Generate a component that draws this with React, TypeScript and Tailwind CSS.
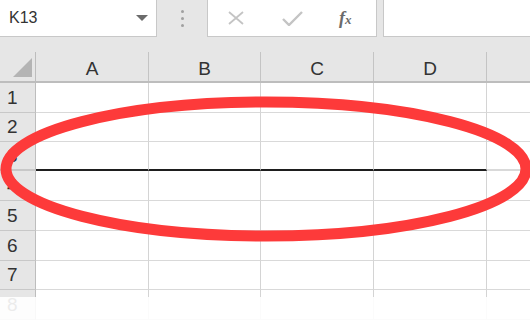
import React from "react";

const cols = [
  { label: "A", w: 113 },
  { label: "B", w: 112 },
  { label: "C", w: 113 },
  { label: "D", w: 113 },
];

const rowHeights = [30, 29, 29, 30, 30, 30, 29, 30];

export default function App() {
  return (
    <div
      className="relative w-[530px] h-[320px] overflow-hidden bg-[#e6e6e6] text-[#262626]"
      style={{ fontFamily: '"Liberation Sans", Arial, sans-serif' }}
    >
      {/* formula bar */}
      <div className="flex h-[37px] items-start">
        <div className="flex h-[37px] w-[157px] items-center justify-between border-r border-b border-[#c8c8c8] bg-white pl-[9px] pr-[8px]">
          <span className="text-[16px] text-[#333]">K13</span>
          <svg width="12" height="6" viewBox="0 0 12 6">
            <polygon points="0,0 12,0 6,6" fill="#6b6b6b" />
          </svg>
        </div>
        <div className="flex h-[37px] w-[50px] flex-col items-center justify-center gap-[4px]">
          <div className="h-[3px] w-[3px] rounded-full bg-[#a0a0a0]" />
          <div className="h-[3px] w-[3px] rounded-full bg-[#a0a0a0]" />
          <div className="h-[3px] w-[3px] rounded-full bg-[#a0a0a0]" />
        </div>
        <div className="flex h-[37px] w-[170px] items-center border-l border-r border-b border-[#c8c8c8] bg-white">
          <svg className="ml-[20px]" width="16" height="14" viewBox="0 0 16 14">
            <path d="M1 1 L15 13 M15 1 L1 13" stroke="#c4c4c4" strokeWidth="1.8" />
          </svg>
          <svg className="ml-[38px]" width="21" height="15" viewBox="0 0 21 15">
            <path d="M1 8 L7 14 L20 1" stroke="#c4c4c4" strokeWidth="2.4" fill="none" />
          </svg>
          <span
            className="ml-[36px] text-[18px] italic font-bold text-[#6b6b6b]"
            style={{ fontFamily: '"Liberation Serif", "Times New Roman", serif' }}
          >
            f<span className="text-[13px]">x</span>
          </span>
        </div>
        <div className="w-[6px]" />
        <div className="h-[37px] flex-1 border-l border-b border-[#c8c8c8] bg-white" />
      </div>

      <div className="h-[15px]" />

      {/* column headers */}
      <div className="flex h-[31px] border-b-2 border-[#bdbdbd]">
        <div className="flex w-[36px] items-end justify-end border-r border-[#bdbdbd] pb-[4px] pr-[3px]">
          <svg width="19" height="19" viewBox="0 0 19 19">
            <polygon points="19,0 19,19 0,19" fill="#b4b4b4" />
          </svg>
        </div>
        {cols.map((c) => (
          <div
            key={c.label}
            className="flex items-center justify-center border-r border-[#c4c4c4] pt-[6px] text-[19px] text-[#333]"
            style={{ width: c.w }}
          >
            {c.label}
          </div>
        ))}
        <div className="flex-1" />
      </div>

      {/* rows */}
      <div className="flex flex-col bg-white">
        {rowHeights.map((h, i) => (
          <div key={i} className="flex" style={{ height: h }}>
            <div
              className={`flex w-[36px] items-center border-r border-[#bdbdbd] bg-[#e6e6e6] pl-[7px] pt-[1px] text-[19px] text-[#333] ${
                i === 2 ? "border-b-2 border-b-[#c8c8c8]" : "border-b border-b-[#c8c8c8]"
              }`}
            >
              {i + 1}
            </div>
            {cols.map((c) => (
              <div
                key={c.label}
                className={`border-r border-[#d4d4d4] ${
                  i === 2 ? "border-b-2 border-b-[#1e1e1e]" : "border-b border-b-[#d9d9d9]"
                }`}
                style={{ width: c.w }}
              />
            ))}
            <div
              className={`flex-1 ${i === 2 ? "border-b-2 border-b-[#d9d9d9]" : "border-b border-b-[#d9d9d9]"}`}
            />
          </div>
        ))}
      </div>

      {/* fade at bottom */}
      <div className="absolute bottom-0 left-0 h-[23px] w-full bg-white/90" />

      {/* red ellipse annotation */}
      <svg className="absolute left-0 top-0" width="530" height="320" viewBox="0 0 530 320">
        <ellipse cx="266" cy="169" rx="260" ry="67" fill="none" stroke="#fd3a3a" strokeWidth="11" />
      </svg>
    </div>
  );
}
